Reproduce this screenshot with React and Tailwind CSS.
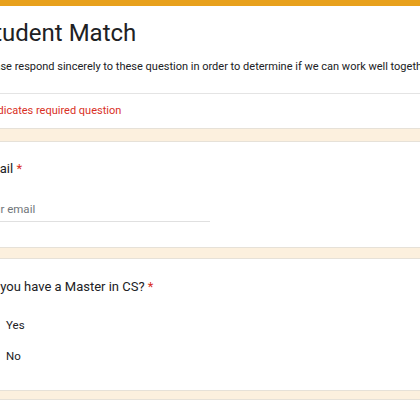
export default function App() {
  return (
    <div className="w-[420px] h-[420px] overflow-hidden bg-[#fcf0de] font-['Roboto',sans-serif] text-[#202124]">
      <div className="-ml-[40px] w-[520px] flex flex-col">
        {/* header card */}
        <div className="bg-white border-x border-b border-[#e6e1d8]">
          <div className="h-[6px] bg-[#e8a11d]" />
          <div className="pl-5 pr-6 pt-3">
            <h1 className="-ml-[1px] text-[24px] leading-[30px] font-normal">Student Match</h1>
            <p className="mt-[11px] -ml-[2px] text-[11px] leading-4 whitespace-nowrap">
              Please respond sincerely to these question in order to determine if we can work well together.
            </p>
          </div>
          <div className="mt-[18px] h-px bg-[#e4e4e4]" />
          <div className="pl-5 pt-[9px] pb-[9px] text-[11px] leading-4 text-[#d93025]">
            * Indicates required question
          </div>
        </div>

        {/* email */}
        <div className="mt-[12px] bg-white border border-[#e6e1d8] pl-5 pt-[18px] pb-[25px]">
          <div className="text-[13px] leading-[18px]">
            Email <span className="text-[#d93025]">*</span>
          </div>
          <div className="mt-[23px] w-[229px] pb-[4px] border-b border-[#e0e0e0] text-[11.5px] leading-4 text-[#70757a]">
            Your email
          </div>
        </div>

        {/* master */}
        <div className="mt-[10px] bg-white border border-[#e6e1d8] pl-5 pt-[19px] pb-[26px]">
          <div className="text-[13px] leading-[18px]">
            Do you have a Master in CS? <span className="text-[#d93025]">*</span>
          </div>
          <div className="mt-[21px] flex flex-col gap-[15px]">
            {["Yes", "No"].map((opt) => (
              <label key={opt} className="flex items-center gap-[9px] text-[11.5px] leading-4">
                <span className="w-4 h-4 rounded-full border-2 border-[#5f6368]" />
                {opt}
              </label>
            ))}
          </div>
        </div>

        <div className="mt-[8px] h-[60px] bg-white border border-[#e6e1d8]" />
      </div>
    </div>
  );
}
